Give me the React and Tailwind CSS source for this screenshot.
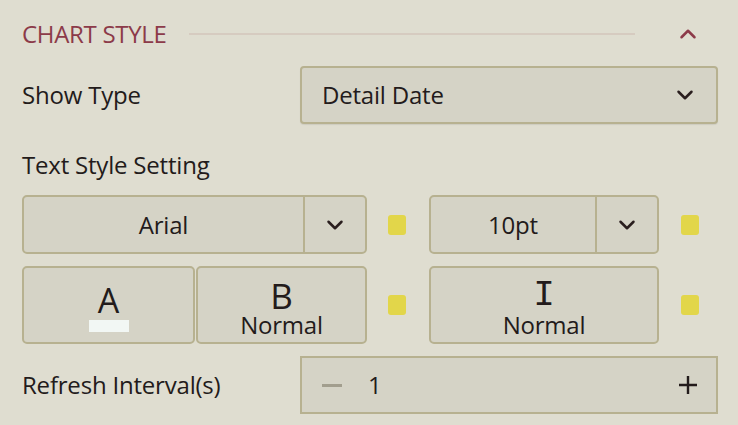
import React from 'react';
import { ChevronDown, ChevronUp } from 'lucide-react';

const box = 'border-2 border-[#b7b190] bg-[#d5d3c6] rounded-[5px]';

const Dot = () => <div className="w-[18px] h-[20px] rounded-[3px] bg-[#e2d64a] shrink-0" />;

const SplitSelect = ({ value, className }) => (
    <div className={`${box} flex h-[59px] ${className}`}>
        <div className="flex-1 flex items-center justify-center">{value}</div>
        <div className="w-[62px] border-l-2 border-[#b7b190] flex items-center justify-center">
            <ChevronDown size={26} strokeWidth={2.3} className="text-[#2a1e1e]" />
        </div>
    </div>
);

export default function App() {
    return (
        <div className="w-[738px] h-[425px] bg-[#dfddd0] pl-[22px] pr-[20px] pt-[14px] text-[#231b1b] text-[24px] tracking-[-0.2px] leading-none" style={{ fontFamily: '"Open Sans", sans-serif' }}>
            {/* header */}
            <div className="h-[40px] flex items-center">
                <span className="text-[#8c3a49] text-[24px] tracking-[-0.3px]">CHART STYLE</span>
                <div className="flex-1 h-[2px] bg-[#d6cbc0] ml-[22px] mr-[40px]" />
                <ChevronUp size={26} strokeWidth={2.3} className="text-[#8c3a49] mr-[17px]" />
            </div>

            <div className="mt-[12px] flex items-center h-[58px]">
                <div className="w-[278px]">Show Type</div>
                <div className="flex-1 h-full border-2 border-[#b7b190] bg-[#d5d3c6] rounded-[4px] flex items-center pl-[20px] pr-[18px] shadow-[0_1px_1px_rgba(0,0,0,0.08)]">
                    <span className="flex-1">Detail Date</span>
                    <ChevronDown size={26} strokeWidth={2.3} className="text-[#2a1e1e]" />
                </div>
            </div>

            <div className="mt-[22px] h-[38px] flex items-center">Text Style Setting</div>

            <div className="mt-[11px] flex items-center">
                <SplitSelect value="Arial" className="w-[345px]" />
                <div className="ml-[21px] mr-[23px]"><Dot /></div>
                <SplitSelect value="10pt" className="w-[230px]" />
                <div className="ml-[22px]"><Dot /></div>
            </div>

            <div className="mt-[12px] flex items-center">
                <div className={`${box} w-[173px] h-[78px] flex flex-col items-center justify-center`}>
                    <span className="text-[34px] leading-none mt-[4px]">A</span>
                    <div className="w-[40px] h-[12px] bg-[#f2f7f4] mt-[3px]" />
                </div>
                <div className={`${box} w-[171px] h-[78px] ml-[1px] flex flex-col items-center pt-[13px]`}>
                    <span className="text-[35px] leading-[30px]">B</span>
                    <span className="leading-[24px] mt-[2px]">Normal</span>
                </div>
                <div className="ml-[21px] mr-[23px]"><Dot /></div>
                <div className={`${box} w-[230px] h-[78px] flex flex-col items-center pt-[13px]`}>
                    <span className="text-[36px] leading-[30px]" style={{ fontFamily: '"Liberation Mono", monospace' }}>I</span>
                    <span className="leading-[24px] mt-[2px]">Normal</span>
                </div>
                <div className="ml-[22px]"><Dot /></div>
            </div>

            <div className="mt-[12px] flex items-center h-[58px]">
                <div className="w-[278px]">Refresh Interval(s)</div>
                <div className="flex-1 h-full border-2 border-[#b7b190] bg-[#d5d3c6] flex items-center pl-[20px] pr-[19px]">
                    <div className="w-[20px] h-[3px] bg-[#a29e8e]" />
                    <span className="flex-1 ml-[26px]">1</span>
                    <svg width="18" height="18" viewBox="0 0 18 18" className="text-[#231b1b]">
                        <path d="M9 0v18M0 9h18" stroke="currentColor" strokeWidth="2.4" />
                    </svg>
                </div>
            </div>
        </div>
    );
}
